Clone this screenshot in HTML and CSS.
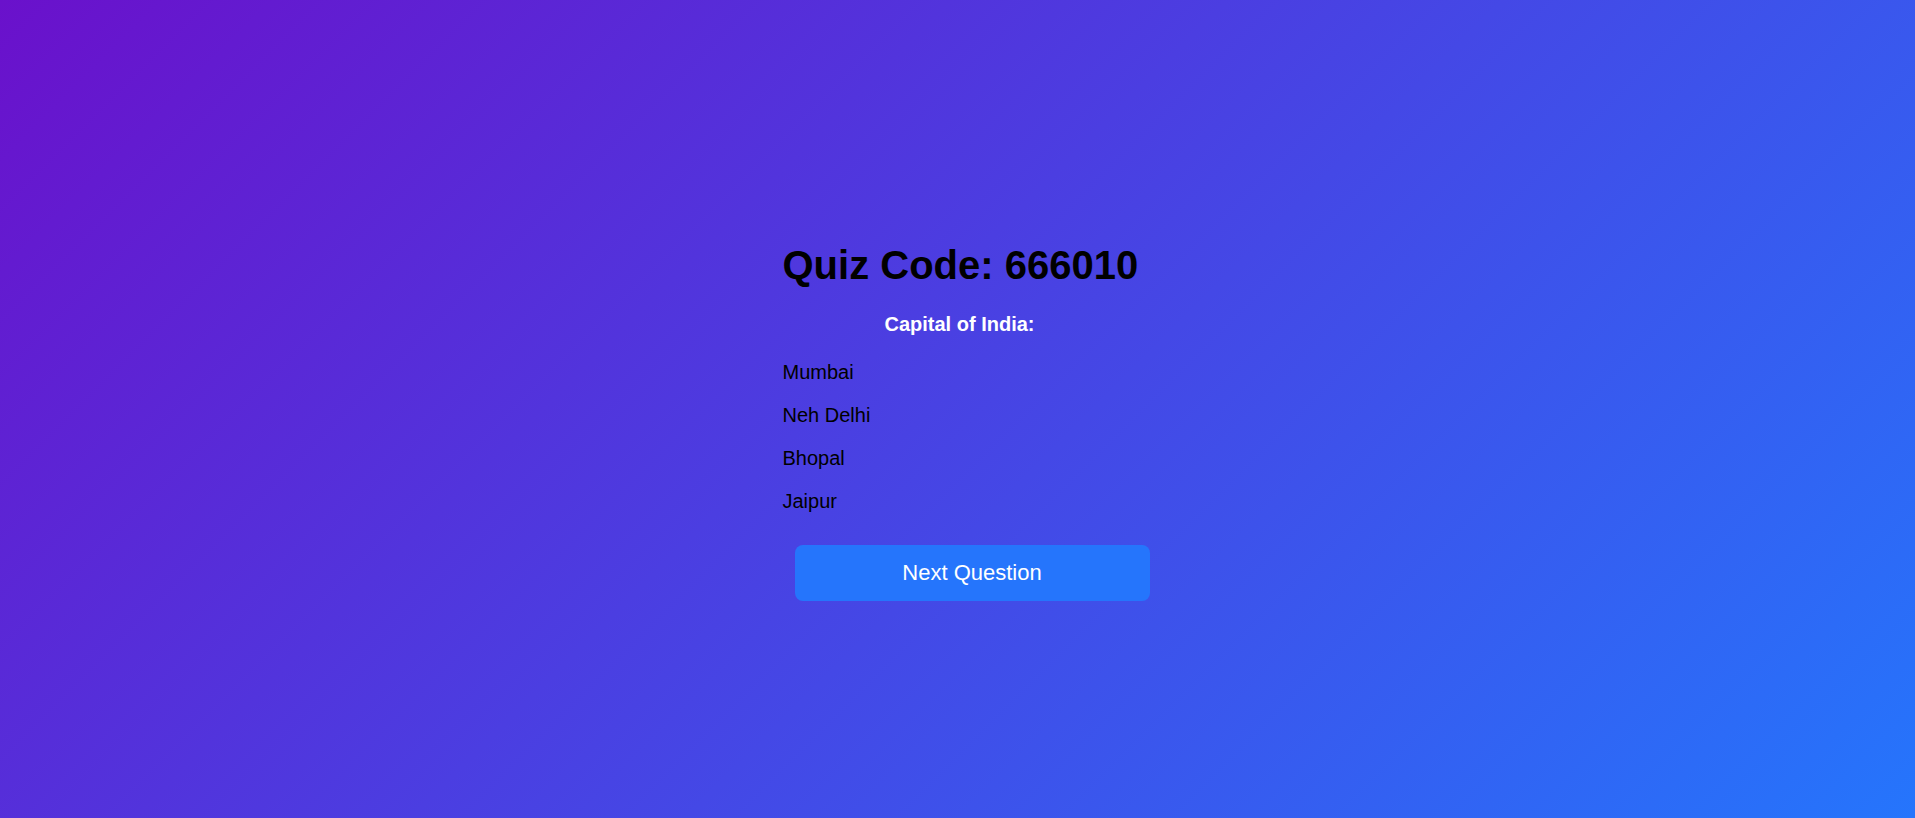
FILE: index.html
```html
<!DOCTYPE html>
<html lang="en">
<head>
<meta charset="utf-8">
<title>Quiz</title>
<link rel="stylesheet" href="styles.css">
</head>
<body>
<main class="page">
  <section class="quiz">
    <h1 class="quiz-code">Quiz Code: 666010</h1>
    <p class="question">Capital of India:</p>
    <ul class="options">
      <li class="option">Mumbai</li>
      <li class="option">Neh Delhi</li>
      <li class="option">Bhopal</li>
      <li class="option">Jaipur</li>
    </ul>
    <button class="next-btn" type="button">Next Question</button>
  </section>
</main>
</body>
</html>
```

FILE: styles.css
```css
html, body {
  margin: 0;
  padding: 0;
  height: 100%;
}

body {
  font-family: "Liberation Sans", Arial, sans-serif;
  background: linear-gradient(135deg, #6a11cb 0%, #2575fc 100%);
  color: #000;
}

.page {
  height: 100vh;
  display: flex;
  justify-content: center;
  align-items: center;
}

.quiz {
  width: 354px;
  margin-left: 4px;
  display: flex;
  flex-direction: column;
  align-items: stretch;
}

.quiz-code {
  margin: 27px 0 0;
  font-size: 40px;
  line-height: 46px;
  font-weight: bold;
  text-align: center;
  white-space: nowrap;
}

.question {
  margin: 25px 0 0;
  font-size: 20px;
  line-height: 23px;
  font-weight: bold;
  color: #fff;
  text-align: center;
}

.options {
  list-style: none;
  margin: 15px 0 0;
  padding: 0;
}

.option {
  padding: 10px 0;
  font-size: 20px;
  line-height: 23px;
  color: #000;
}

.next-btn {
  margin: 22px 0 2px 12px;
  width: 355px;
  height: 56px;
  border: none;
  border-radius: 8px;
  background: #2575fc;
  color: #fff;
  font-family: "Liberation Sans", Arial, sans-serif;
  font-size: 22px;
  cursor: pointer;
}
```
